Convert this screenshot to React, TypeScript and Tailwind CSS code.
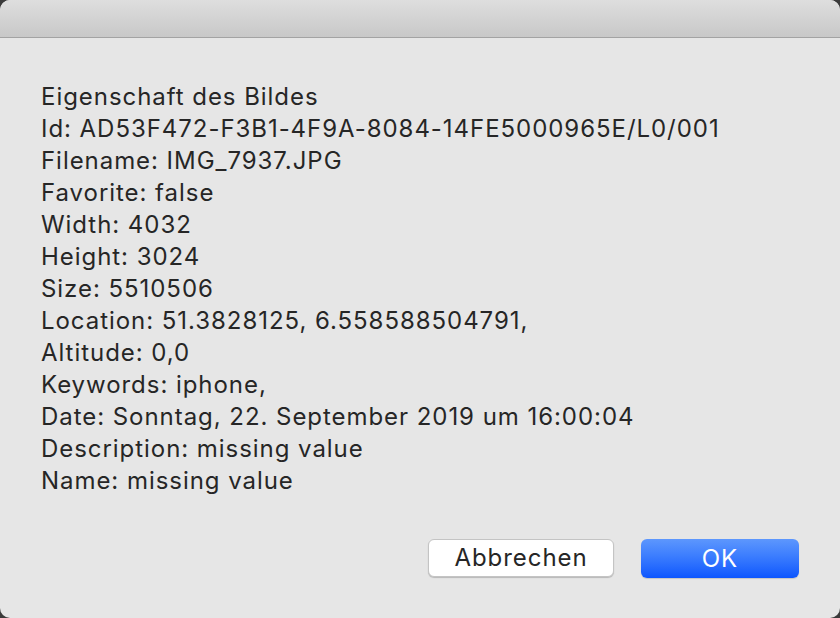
export default function App() {
  const lines = [
    "Eigenschaft des Bildes",
    "Id: AD53F472-F3B1-4F9A-8084-14FE5000965E/L0/001",
    "Filename: IMG_7937.JPG",
    "Favorite: false",
    "Width: 4032",
    "Height: 3024",
    "Size: 5510506",
    "Location: 51.3828125, 6.558588504791,",
    "Altitude: 0,0",
    "Keywords: iphone,",
    "Date: Sonntag, 22. September 2019 um 16:00:04",
    "Description: missing value",
    "Name: missing value",
  ];

  return (
    <div className="w-[840px] h-[618px] bg-[#3a3a3a] font-['Inter',sans-serif]">
      <div className="w-full h-full rounded-[10px] overflow-hidden bg-[#e6e6e6] flex flex-col">
        <div className="h-[38px] bg-gradient-to-b from-[#dedede] to-[#c8c8c8] border-b border-[#a3a3a3] shrink-0" />
        <div className="flex-1 flex flex-col">
          <div className="pl-[41px] pt-[43px] text-[24px] leading-[32px] tracking-[0.95px] text-[#262626]">
            {lines.map((l) => (
              <div key={l}>{l}</div>
            ))}
          </div>
          <div className="flex justify-end gap-[27px] pr-[41px] mt-[42px]">
            <button className="w-[186px] h-[38px] rounded-[6px] bg-white border border-[#c4c4c4] shadow-[0_1px_1px_rgba(0,0,0,0.2)] text-[24px] tracking-[0.95px] text-[#262626]">
              Abbrechen
            </button>
            <button className="w-[158px] h-[39px] rounded-[6px] bg-gradient-to-b from-[#5d97fd] to-[#0c55fe] text-[24px] tracking-[0.95px] text-white shadow-[0_1px_1px_rgba(0,0,0,0.15)]">
              OK
            </button>
          </div>
        </div>
      </div>
    </div>
  );
}
